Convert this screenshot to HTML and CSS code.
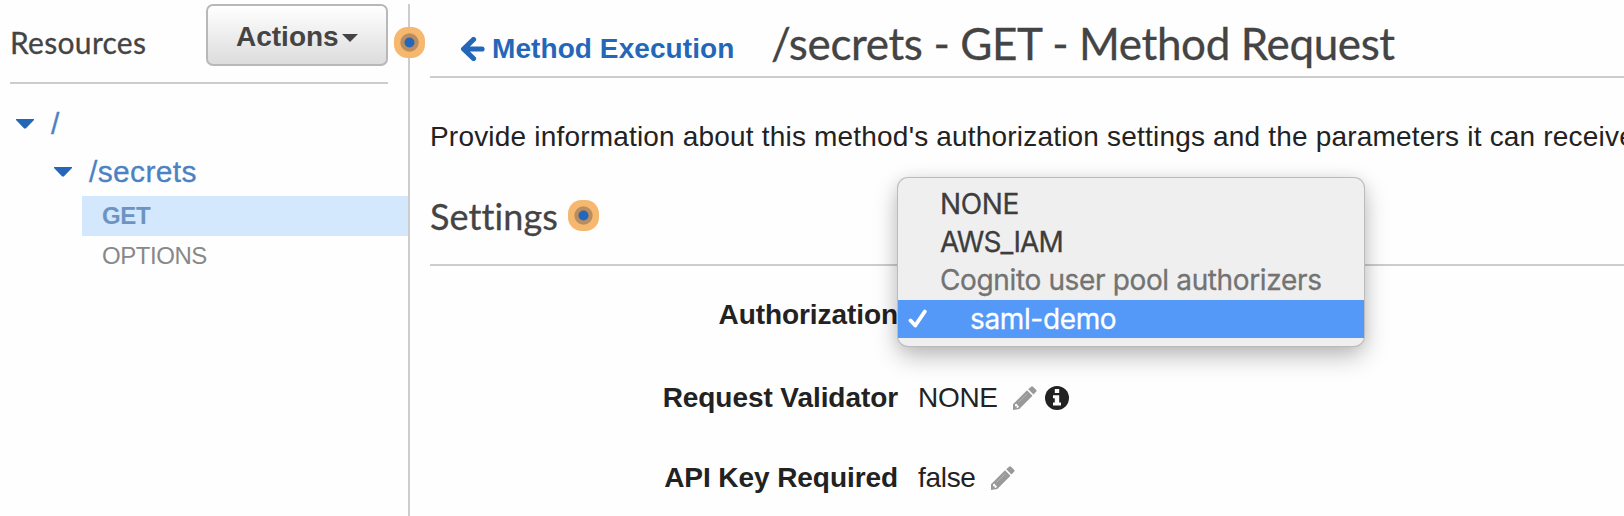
FILE: index.html
```html
<!DOCTYPE html>
<html lang="en">
<head>
<meta charset="utf-8">
<title>Method Request</title>
<link rel="stylesheet" href="styles.css">
</head>
<body>
<svg width="0" height="0" class="defs">
  <symbol id="pencil" viewBox="0 0 24 24">
    <path d="M15.2 3.2 18.4.6Q19.2 0 20 .7L23.3 4Q24 4.8 23.3 5.600L20.500 8.600ZM14 4.300 19.500 9.800 6.300 23 0 24 0 18.200ZM2 18.600 2 20.300 3.700 20.300 3.700 22 5 21.700 6 20.700 3.200 17.600Z" fill-rule="evenodd" fill="#999"/>
    <path d="M5.500 16.200 14.300 7.600" stroke="#b4b4b4" stroke-width="1" fill="none"/>
  </symbol>
</svg>
<div class="app">
  <aside class="sidebar">
    <header class="side-head">
      <h2 class="side-title">Resources</h2>
      <button class="actions"><span class="actions-text">Actions</span><svg class="caret" width="16" height="8" viewBox="0 0 16 8"><path d="M0 0H16L8 8Z" fill="#444"/></svg></button>
    </header>
    <nav class="tree">
      <div class="node root"><svg class="arrow" width="18" height="10" viewBox="0 0 18 10"><path d="M0 0H18V1L9.800 9.500H8.200L0 1Z" fill="#2467b8"/></svg><span class="path">/</span></div>
      <div class="node child"><svg class="arrow" width="18" height="10" viewBox="0 0 18 10"><path d="M0 0H18V1L9.800 9.500H8.200L0 1Z" fill="#2467b8"/></svg><span class="path">/secrets</span></div>
      <div class="verb selected"><span>GET</span></div>
      <div class="verb"><span>OPTIONS</span></div>
    </nav>
    <svg class="beacon on-edge" viewBox="0 0 31 31"><rect width="31" height="31" rx="13.500" fill="#f6b86f"/><circle cx="15.500" cy="15.500" r="9.200" fill="#b98d5f"/><circle cx="15.500" cy="15.500" r="5" fill="#2467b8"/></svg>
  </aside>
  <main class="main">
    <header class="main-head">
      <a class="back"><svg class="back-arrow" width="24" height="24" viewBox="0 0 24 24"><path d="M12.500 2.500 2.800 12 12.500 21.500M4 12H21" fill="none" stroke="#2467b8" stroke-width="5.200" stroke-linecap="round"/></svg><span class="back-text">Method Execution</span></a>
      <h1 class="title">/secrets - GET - Method Request</h1>
    </header>
    <p class="intro">Provide information about this method's authorization settings and the parameters it can receive</p>
    <div class="section-head">
      <h2 class="section-title">Settings</h2>
      <svg class="beacon" viewBox="0 0 31 31"><rect width="31" height="31" rx="13.500" fill="#f6b86f"/><circle cx="15.500" cy="15.500" r="9.200" fill="#b98d5f"/><circle cx="15.500" cy="15.500" r="5" fill="#2467b8"/></svg>
    </div>
    <div class="field auth">
      <span class="label l1">Authorization</span>
      <div class="menu">
        <div class="option none">NONE</div>
        <div class="option aws">AWS_IAM</div>
        <div class="option group">Cognito user pool authorizers</div>
        <div class="option chosen"><svg class="check" width="20" height="20" viewBox="0 0 20 20"><path d="M2.600 11.500 7.300 16.500 16.800 2.500" fill="none" stroke="#fff" stroke-width="3.900" stroke-linecap="round" stroke-linejoin="round"/></svg><span>saml-demo</span></div>
      </div>
    </div>
    <div class="field validator">
      <span class="label l2">Request Validator</span>
      <span class="value">NONE</span>
      <svg class="pencil" width="24" height="24"><use href="#pencil"/></svg>
      <svg class="info" width="24" height="24" viewBox="0 0 24 24"><circle cx="12" cy="12" r="12" fill="#222"/><path d="M9.800 3H14.200V7H9.800ZM8 9.300H14.200V16.500H16V19.500H8V16.500H9.800V12.300H8Z" fill="#fff"/></svg>
    </div>
    <div class="field apikey">
      <span class="label l3">API Key Required</span>
      <span class="value">false</span>
      <svg class="pencil" width="24" height="24"><use href="#pencil"/></svg>
    </div>
  </main>
</div>
</body>
</html>
```
FILE: styles.css
```css
* { box-sizing: border-box; }
body {
  margin: 0;
  height: 516px;
  overflow: hidden;
  background: #fefefe;
  color: #222;
  font: 28px/32px "Liberation Sans", Arial, sans-serif;
}
h1, h2, p { margin: 0; font-weight: 400; }
svg { display: block; flex: none; }
.defs { position: absolute; }
.app { display: flex; height: 516px; padding-top: 4px; }
.sidebar {
  position: relative;
  flex: none;
  width: 410px;
  border-right: 2px solid #ccc;
}
.side-head {
  display: flex;
  justify-content: space-between;
  height: 80px;
  margin: 0 20px 0 10px;
  border-bottom: 2px solid #ccc;
}
.side-title {
  padding-top: 21px;
  font: 30px/34px Lato, sans-serif;
  letter-spacing: .3px;
  color: #444;
}
.side-title, .title, .section-title, .menu, .path { -webkit-text-stroke: .3px currentColor; }
.actions {
  display: flex;
  align-items: center;
  width: 182px;
  height: 62px;
  padding: 3px 0 0 28px;
  border: 2px solid #b8b8b8;
  border-radius: 7px;
  background: linear-gradient(#fff, #dcdcdc);
  color: #444;
  font: bold 28px/32px "Liberation Sans", Arial, sans-serif;
}
.actions-text { width: 106px; text-align: left; }
.caret { margin-top: 3px; }
.tree { color: #4b82c3; }
.node { display: flex; align-items: center; height: 48px; gap: 17px; font-size: 30px; }
.root { margin-top: 16px; padding-left: 16px; }
.child { padding-left: 54px; }
.path { letter-spacing: .35px; }
.verb {
  height: 40px;
  margin-left: 82px;
  padding-left: 20px;
  font-size: 24px;
  line-height: 39px;
  letter-spacing: -.45px;
  color: #888;
}
.selected { background: #d3e8fd; color: #6d94c0; font-weight: 700; letter-spacing: -.3px; }
.beacon { width: 31px; height: 31px; }
.on-edge { position: absolute; left: 393.500px; top: 23px; }
.main { flex: 1; min-width: 0; padding-left: 20px; }
.main-head { display: flex; height: 74px; border-bottom: 2px solid #ccc; }
.back {
  display: flex;
  flex: none;
  align-items: center;
  gap: 7px;
  width: 341px;
  height: 32px;
  margin-top: 29px;
  padding-left: 31px;
  color: #2467b8;
  font-weight: 700;
  letter-spacing: .08px;
}
.back-text { white-space: nowrap; }
.title {
  padding-top: 15px;
  font: 44px/48px Lato, sans-serif;
  letter-spacing: -.38px;
  color: #444;
  white-space: nowrap;
}
.intro { padding-top: 43px; height: 75px; letter-spacing: .19px; white-space: nowrap; }
.section-head {
  display: flex;
  align-items: center;
  gap: 10px;
  height: 113px;
  padding-top: 14px;
  border-bottom: 2px solid #ccc;
}
.section-title {
  font: 36px/44px Lato, sans-serif;
  font-variant-ligatures: none;
  letter-spacing: .1px;
  color: #444;
}
.field { display: flex; align-items: center; height: 32px; }
.label { width: 468px; text-align: right; font-weight: 700; letter-spacing: -.07px; white-space: nowrap; }
.value { margin-left: 20px; letter-spacing: -.3px; }
.auth { position: relative; margin-top: 33px; }
.validator { margin-top: 51px; }
.apikey { margin-top: 48px; }
.pencil { margin: 0 0 0 15px; }
.info { margin: -1px 0 0 8px; }
.menu {
  position: absolute;
  left: 468px;
  top: -121px;
  width: 466px;
  height: 168px;
  padding-top: 8px;
  border-radius: 10px;
  background: #efefef;
  box-shadow: 0 0 0 1px #bbb, 0 10px 24px rgba(0,0,0,.27), 0 0 16px rgba(0,0,0,.08);
  font: 28px/37px Inter, "Liberation Sans", sans-serif;
  letter-spacing: -.36px;
  color: #3d3d3d;
}
.option { height: 38px; padding-left: 42px; white-space: nowrap; }
.aws { letter-spacing: -.9px; }
.group { color: #737373; }
.chosen {
  display: flex;
  align-items: center;
  gap: 42px;
  padding-left: 10px;
  background: #5499f8;
  color: #fff;
}
```
